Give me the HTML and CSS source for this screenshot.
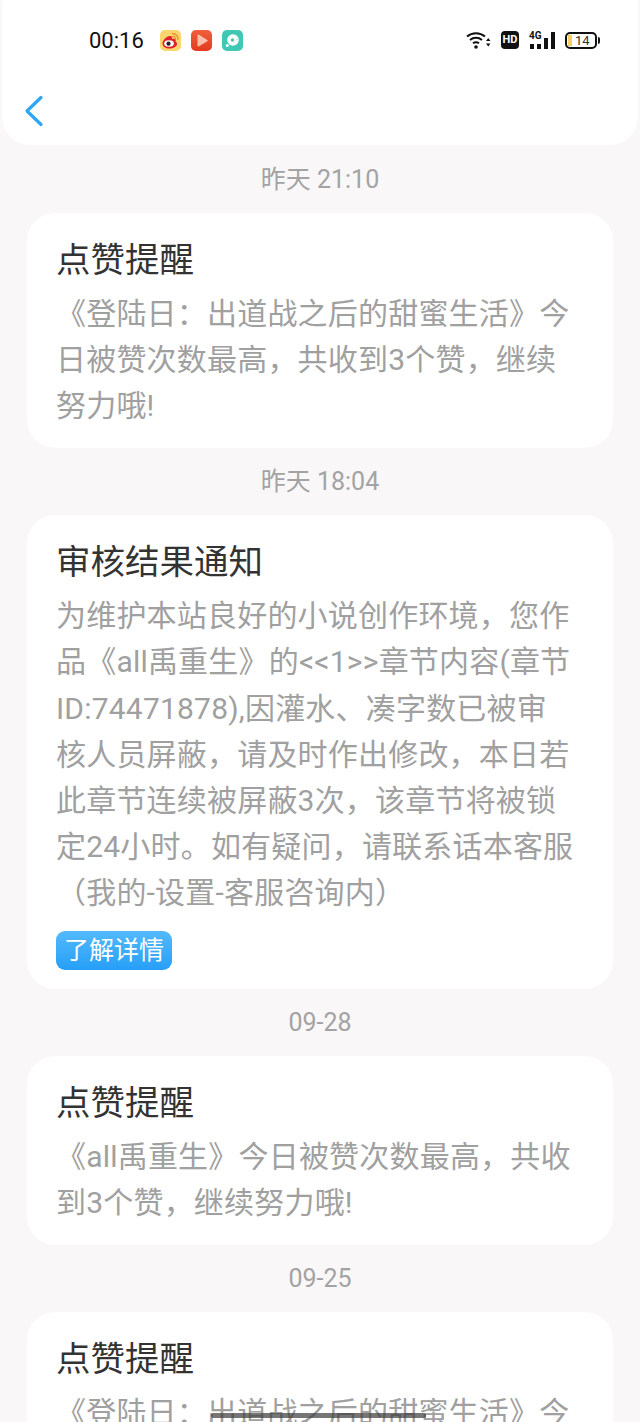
FILE: index.html
```html
<!DOCTYPE html>
<html lang="zh-CN">
<head>
    <meta charset="UTF-8">
    <meta name="viewport" content="width=device-width, initial-scale=1.0">
    <title>消息通知</title>
    <link rel="stylesheet" href="styles.css">
</head>
<body>
    <!-- Status bar + back button -->
    <header class="topbar">
        <div class="statusbar">
            <div class="status-left">
                <span class="clock">00:16</span>
                <div class="app-icons">
                    <svg class="app-icon" viewBox="0 0 21 21">
                        <rect width="21" height="21" rx="5" fill="#fbd66f"/>
                        <path d="M2.500 13.500c0-3 4-7.500 7.500-7.500 2 0 2.500 1.500 2 3 3-1 4.500 .5 3.500 2.500 1 .5 1.500 1.500 1.500 2.500 0 2.500-3.500 4.500-7.500 4.500s-7-2-7-5z" fill="#e0232b"/>
                        <ellipse cx="9" cy="13.500" rx="4.800" ry="3.300" fill="#fff"/>
                        <circle cx="8.500" cy="13.700" r="2.100" fill="#222"/>
                        <path d="M12.500 3.500a5.500 5.500 0 0 1 5.500 6M12.800 6.300a2.800 2.800 0 0 1 2.700 3" fill="none" stroke="#e8902b" stroke-width="1.300" stroke-linecap="round"/>
                    </svg>
                    <svg class="app-icon" viewBox="0 0 21 21">
                        <defs>
                            <linearGradient id="play-bg" x1="0" y1="0" x2="0" y2="1">
                                <stop offset="0" stop-color="#f0603a"/>
                                <stop offset="1" stop-color="#e23a20"/>
                            </linearGradient>
                        </defs>
                        <rect width="21" height="21" rx="5" fill="url(#play-bg)"/>
                        <path d="M6.500 5.200v10.600c0 .6.600 1 1.100.700l8.700-5.300c.5-.3.500-1 0-1.300L7.600 4.500c-.5-.3-1.100.1-1.100.7z" fill="#fbbfae"/>
                    </svg>
                    <svg class="app-icon" viewBox="0 0 21 21">
                        <rect width="21" height="21" rx="5" fill="#3fc8b4"/>
                        <circle cx="11" cy="10" r="5.800" fill="#fff"/>
                        <circle cx="10.500" cy="10" r="1.700" fill="#3fc8b4"/>
                        <circle cx="15" cy="9" r=".6" fill="#3fc8b4"/>
                        <circle cx="5.300" cy="15.600" r="1.500" fill="#fff"/>
                    </svg>
                </div>
            </div>
            <div class="status-right">
                <svg class="wifi" viewBox="0 0 25 18">
                    <path d="M1 5.500a14 14 0 0 1 18 0M4 9a9.500 9.500 0 0 1 12 0M7 12.300a5 5 0 0 1 6 0" fill="none" stroke="#111" stroke-width="2"/>
                    <circle cx="10" cy="16" r="1.800" fill="#111"/>
                    <path d="M20 10h4.500l-2.250-3zM20 12.500h4.500l-2.250 3z" fill="#111"/>
                </svg>
                <span class="hd-badge">HD</span>
                <div class="signal">
                    <span class="signal-label">4G</span>
                    <span class="bar bar-1"></span>
                    <span class="bar bar-2"></span>
                    <span class="bar bar-3"></span>
                    <span class="bar bar-4"></span>
                </div>
                <div class="battery">
                    <span class="battery-level"></span>
                    <span class="battery-text">14</span>
                </div>
            </div>
        </div>
        <div class="navbar">
            <svg class="back" viewBox="0 0 20 32">
                <path d="M17 2.500 3 16l14 13.500" fill="none" stroke="#2ea6f3" stroke-width="3.200" stroke-linecap="round" stroke-linejoin="round"/>
            </svg>
        </div>
    </header>

    <main class="messages">
        <div class="time">昨天 21:10</div>
        <section class="card">
            <h2>点赞提醒</h2>
            <p>《登陆日：出道战之后的甜蜜生活》今日被赞次数最高，共收到3个赞，继续努力哦!</p>
        </section>

        <div class="time">昨天 18:04</div>
        <section class="card">
            <h2>审核结果通知</h2>
            <p>为维护本站良好的小说创作环境，您作品《all禹重生》的&lt;&lt;1&gt;&gt;章节内容(章节ID:74471878),因灌水、凑字数已被审核人员屏蔽，请及时作出修改，本日若此章节连续被屏蔽3次，该章节将被锁定24小时。如有疑问，请联系话本客服（我的-设置-客服咨询内）</p>
            <a class="detail-btn">了解详情</a>
        </section>

        <div class="time">09-28</div>
        <section class="card">
            <h2>点赞提醒</h2>
            <p>《all禹重生》今日被赞次数最高，共收到3个赞，继续努力哦!</p>
        </section>

        <div class="time">09-25</div>
        <section class="card">
            <h2>点赞提醒</h2>
            <p>《登陆日：出道战之后的甜蜜生活》今日被赞次数最高，共收到3个赞，继续努力哦!</p>
        </section>
    </main>

    <div class="home-indicator"></div>
</body>
</html>
```

FILE: styles.css
```css
body {
    margin: 0;
    height: 1422px;
    overflow: hidden;
    position: relative;
    background-color: #f9f7f8;
    font-family: Roboto, "Noto Sans CJK SC", sans-serif;
}
.topbar {
    background: #fff;
    margin: 0 2px 1px;
    height: 145px;
    border-radius: 3px 3px 28px 28px;
    box-sizing: border-box;
    padding-top: 1px;
}
.statusbar {
    height: 78px;
    display: flex;
    align-items: center;
    justify-content: space-between;
    padding: 0 41px 0 87px;
}
.status-left, .status-right, .app-icons {
    display: flex;
    align-items: center;
}
.clock {
    font-size: 22px;
    color: #111;
    margin-right: 16px;
}
.app-icons {
    gap: 10px;
}
.app-icon {
    width: 21px;
    height: 21px;
}
.status-right {
    gap: 10px;
}
.wifi {
    width: 25px;
    height: 18px;
}
.hd-badge {
    width: 18px;
    height: 18px;
    background: #111;
    color: #fff;
    border-radius: 4px;
    font-size: 11px;
    font-weight: 700;
    line-height: 18px;
    text-align: center;
}
.signal {
    display: flex;
    align-items: flex-end;
    justify-content: flex-end;
    gap: 3px;
    height: 18px;
    width: 26px;
    position: relative;
}
.signal-label {
    position: absolute;
    left: 0;
    top: -1px;
    font-size: 10px;
    font-weight: 700;
    line-height: 11px;
    color: #111;
}
.bar {
    width: 4px;
    background: #111;
}
.bar-1 { height: 5px; }
.bar-2 { height: 5px; }
.bar-3 { height: 11px; }
.bar-4 { height: 17px; }
.battery {
    box-sizing: border-box;
    width: 32px;
    height: 17px;
    border: 2px solid #111;
    border-radius: 5px;
    position: relative;
    display: flex;
    align-items: center;
}
.battery::after {
    content: "";
    position: absolute;
    right: -5px;
    top: 3px;
    width: 2px;
    height: 7px;
    background: #111;
    border-radius: 0 2px 2px 0;
}
.battery-level {
    width: 4px;
    height: 11px;
    margin-left: 1px;
    background: #f6cf62;
}
.battery-text {
    font-size: 13px;
    color: #333;
    margin-left: 3px;
    line-height: 13px;
}
.navbar {
    padding: 16px 0 0 22px;
}
.back {
    display: block;
    width: 20px;
    height: 32px;
}
.messages {
    padding: 0 27px;
}
.time {
    color: #a3a3a3;
    font-size: 25px;
    text-align: center;
    height: 67px;
    line-height: 68px;
}
.card {
    background: #fff;
    border-radius: 28px;
    padding: 23px 38px 18.500px 29px;
}
.card h2 {
    margin: 0 0 7px;
    font-size: 34.500px;
    font-weight: 400;
    color: #333;
    line-height: 48px;
}
.card p {
    margin: 0;
    font-size: 30px;
    letter-spacing: 0.200px;
    line-height: 46.200px;
    color: #a0a0a0;
}
.detail-btn {
    display: block;
    width: 116px;
    height: 39px;
    margin: 14px 0 1px;
    border-radius: 9px;
    background: linear-gradient(#54b9fb, #269ff8);
    color: #fff;
    font-size: 25px;
    line-height: 39px;
    text-align: center;
}
.home-indicator {
    position: absolute;
    left: 211px;
    top: 1413px;
    width: 215px;
    height: 5px;
    background: rgba(60, 60, 60, 0.7);
    border-radius: 3px;
}
```
